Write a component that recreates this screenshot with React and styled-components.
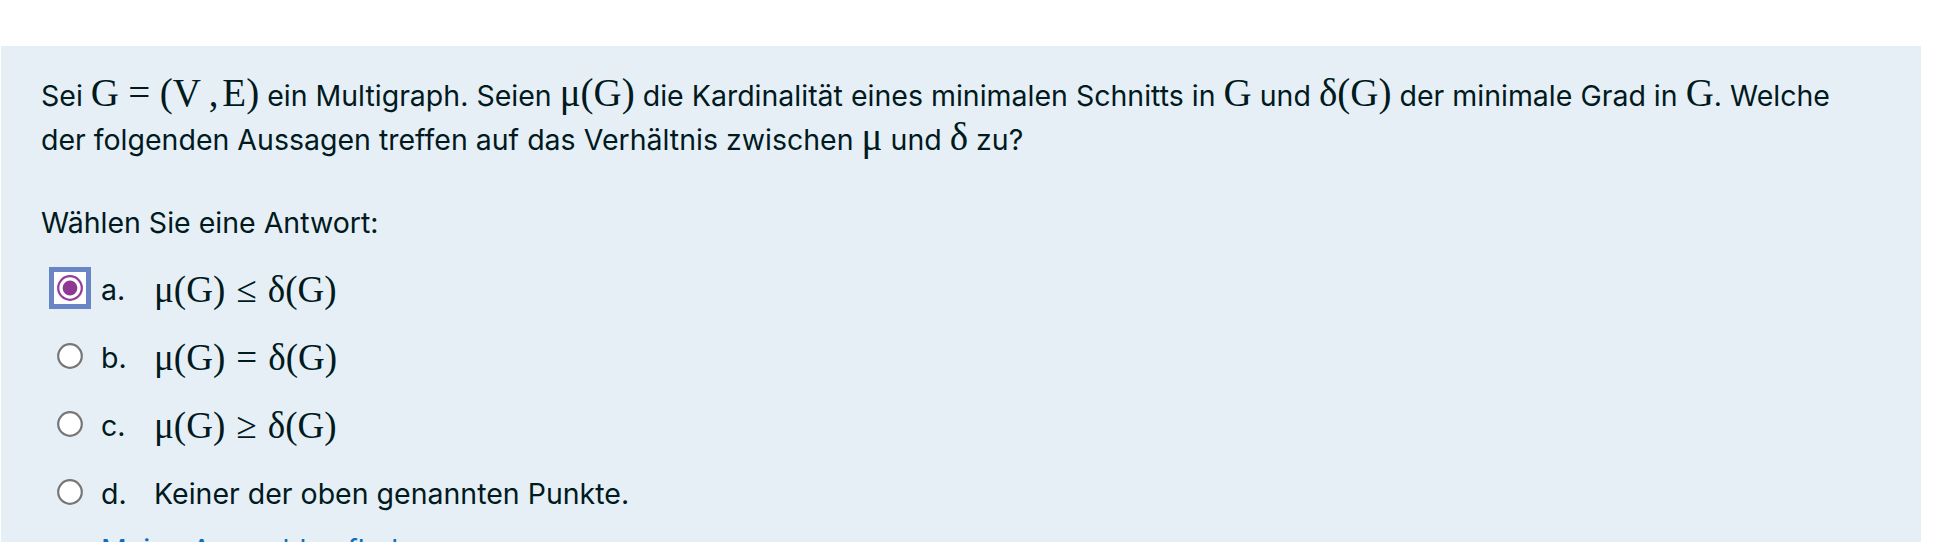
import React from "react";
import styled, { createGlobalStyle } from "styled-components";

const GlobalStyle = createGlobalStyle`
  html, body {
    margin: 0;
    padding: 0;
    background: #ffffff;
  }
  body {
    font-family: Inter, "Noto Sans", sans-serif;
    color: #001a1e;
    overflow: hidden;
  }
`;

const answers = [
  { key: "a", math: ["μ(G)", "≤", "δ(G)"], checked: true },
  { key: "b", math: ["μ(G)", "=", "δ(G)"] },
  { key: "c", math: ["μ(G)", "≥", "δ(G)"] },
  { key: "d", text: "Keiner der oben genannten Punkte." },
];

function Radio({ checked }) {
  return (
    <RadioFrame $focused={checked}>
      <svg width="26" height="26" viewBox="0 0 26 26">
        <circle
          cx="13"
          cy="13"
          r="11.8"
          fill="#fff"
          stroke={checked ? "#933d9a" : "#767676"}
          strokeWidth="2.2"
        />
        {checked && <circle cx="13" cy="13" r="7.4" fill="#8d3893" />}
      </svg>
    </RadioFrame>
  );
}

export default function App() {
  return (
    <>
      <GlobalStyle />
      <Page>
        <Formulation>
          <QText>
            Sei{" "}
            <M>
              G<Op>=</Op>(V<Comma>,</Comma>E)
            </M>{" "}
            ein Multigraph. Seien <M>μ(G)</M> die Kardinalität eines minimalen
            Schnitts in <M>G</M> und <M>δ(G)</M> der minimale Grad in <M>G</M>.
            Welche der folgenden Aussagen treffen auf das Verhältnis zwischen{" "}
            <M>μ</M> und <M>δ</M> zu?
          </QText>
          <Prompt>Wählen Sie eine Antwort:</Prompt>
          <AnswerList>
            {answers.map((a) => (
              <Option key={a.key}>
                <Radio checked={a.checked} />
                <Letter>{a.key}.</Letter>
                {a.math ? (
                  <OptionMath>
                    {a.math[0]}
                    <Op>{a.math[1]}</Op>
                    {a.math[2]}
                  </OptionMath>
                ) : (
                  <span>{a.text}</span>
                )}
              </Option>
            ))}
          </AnswerList>
          <ClearLink href="#">Meine Auswahl aufheben</ClearLink>
        </Formulation>
      </Page>
    </>
  );
}

const Page = styled.div`
  padding-top: 46px;
  padding-left: 1px;
`;

const Formulation = styled.div`
  width: 1920px;
  box-sizing: border-box;
  background: #e7eff6;
  padding: 27px 40px 40px 40px;
  font-size: 28.5px;
  line-height: 43px;
`;

const QText = styled.div`
  margin: 0;
`;

const M = styled.span`
  font-family: "Liberation Serif", "DejaVu Serif", serif;
  font-size: 39px;
  line-height: 1;
`;

const Op = styled.span`
  margin: 0 0.24em;
`;

const Comma = styled.span`
  margin: 0 0.1em 0 0.2em;
`;

const Prompt = styled.div`
  margin-top: 40px;
`;

const AnswerList = styled.div`
  display: flex;
  flex-direction: column;
  margin-top: 11px;
`;

const Option = styled.div`
  display: flex;
  align-items: center;
  height: 68px;
  padding-left: 13px;
`;

const RadioFrame = styled.span`
  display: inline-flex;
  padding: 3px;
  margin-top: -3px;
  background: ${(p) => (p.$focused ? "#fff" : "transparent")};
  box-shadow: ${(p) => (p.$focused ? "0 0 0 5px #6a85c6" : "none")};
`;

const Letter = styled.span`
  margin-left: 15px;
  width: 53px;
`;

const OptionMath = styled.span`
  font-family: "Liberation Serif", "DejaVu Serif", serif;
  font-size: 37px;
  line-height: 1;

  ${Op} {
    margin: 0 0.3em;
  }
`;

const ClearLink = styled.a`
  display: inline-block;
  margin-top: 1px;
  margin-left: 60px;
  color: #0f6cbf;
  text-decoration: none;
`;
